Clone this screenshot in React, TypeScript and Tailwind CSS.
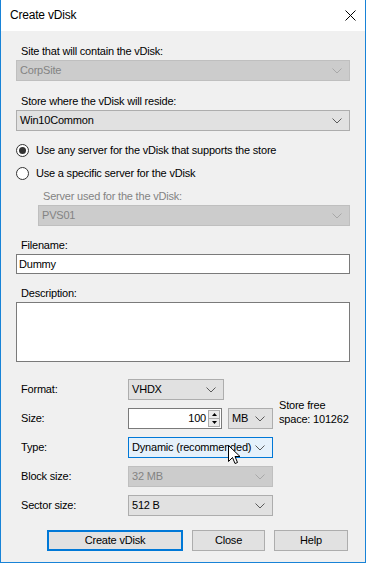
import type { ReactNode } from 'react';

const font = { fontFamily: '"Liberation Sans", Arial, sans-serif' };

function Chevron({ disabled }: { disabled?: boolean }) {
  return (
    <svg width="10" height="6" viewBox="0 0 10 6" className="shrink-0">
      <path
        d="M0.5 0.5 L5 5 L9.5 0.5"
        fill="none"
        stroke={disabled ? '#a8a8a8' : '#5a5a5a'}
        strokeWidth="1"
      />
    </svg>
  );
}

function Combo({
  value,
  disabled,
  focused,
  className = '',
}: {
  value: string;
  disabled?: boolean;
  focused?: boolean;
  className?: string;
}) {
  const tone = disabled
    ? 'bg-[#cccccc] border-[#bfbfbf] text-[#838383]'
    : focused
      ? 'bg-[#e5f1fb] border-[#0078d7] text-black'
      : 'bg-[#e1e1e1] border-[#adadad] text-black';
  return (
    <div className={`flex h-[21px] shrink-0 items-center justify-between whitespace-nowrap border pl-[3px] pr-[7px] ${tone} ${className}`}>
      <span className="leading-[15px]">{value}</span>
      <Chevron disabled={disabled} />
    </div>
  );
}

function Label({ children, className = '' }: { children: ReactNode; className?: string }) {
  return <div className={`h-[16px] shrink-0 whitespace-nowrap pl-[5px] leading-[15px] ${className}`}>{children}</div>;
}

function Radio({ checked, children }: { checked?: boolean; children: ReactNode }) {
  return (
    <div className="flex h-[23px] items-center gap-[7px] whitespace-nowrap">
      <span className="flex h-[13px] w-[13px] items-center justify-center rounded-full border border-[#333333] bg-white">
        {checked && <span className="h-[7px] w-[7px] rounded-full bg-[#333333]" />}
      </span>
      <span className="leading-[15px]">{children}</span>
    </div>
  );
}

function Row({ label, children }: { label: string; children: ReactNode }) {
  return (
    <div className="flex h-[21px] items-center whitespace-nowrap">
      <div className="w-[112px] shrink-0 pl-[5px] leading-[15px]">{label}</div>
      {children}
    </div>
  );
}

function Button({ children, primary, className = '' }: { children: ReactNode; primary?: boolean; className?: string }) {
  return (
    <div
      className={`flex h-[21px] items-center justify-center bg-[#e1e1e1] leading-[15px] ${
        primary ? 'border-2 border-[#0078d7]' : 'border border-[#adadad]'
      } ${className}`}
    >
      {children}
    </div>
  );
}

function Cursor() {
  return (
    <svg width="13" height="20" viewBox="0 0 13 20" className="pointer-events-none absolute left-[227px] top-[445px]">
      <path
        d="M0.5 0.5 L0.5 16.5 L4.5 12.5 L7 18.5 L9.5 17.5 L7 11.5 L12 11.5 Z"
        fill="white"
        stroke="black"
        strokeWidth="1"
        strokeLinejoin="miter"
      />
    </svg>
  );
}

export default function App() {
  return (
    <div
      style={font}
      className="relative flex h-[563px] w-[366px] flex-col overflow-hidden border-x border-b border-[#1883d7] bg-[#f0f0f0] text-[11px] tracking-[-0.2px] text-black"
    >
      <div className="flex h-[31px] shrink-0 items-center justify-between bg-white pl-[9px] pr-[9px]">
        <span className="text-[12px] leading-[15px]">Create vDisk</span>
        <svg width="11" height="11" viewBox="0 0 11 11">
          <path d="M0.5 0.5 L10.5 10.5 M10.5 0.5 L0.5 10.5" stroke="black" strokeWidth="1" />
        </svg>
      </div>

      <div className="flex flex-col px-[15px]">
        <Label className="mt-[13px]">Site that will contain the vDisk:</Label>
        <Combo value="CorpSite" disabled />

        <Label className="mt-[13px]">Store where the vDisk will reside:</Label>
        <Combo value="Win10Common" />

        <div className="mt-[8px] flex flex-col">
          <Radio checked>Use any server for the vDisk that supports the store</Radio>
          <Radio>Use a specific server for the vDisk</Radio>
        </div>

        <div className="ml-[22px] flex flex-col">
          <Label className="mt-[4px] text-[#838383]">Server used for the the vDisk:</Label>
          <Combo value="PVS01" disabled />
        </div>

        <Label className="mt-[12px]">Filename:</Label>
        <div className="flex h-[20px] shrink-0 items-center border border-[#7a7a7a] bg-white pl-[2px] leading-[15px]">Dummy</div>

        <Label className="mt-[12px]">Description:</Label>
        <div className="h-[60px] shrink-0 border border-[#7a7a7a] bg-white" />

        <div className="mt-[17px] flex flex-col gap-[8px]">
          <Row label="Format:">
            <Combo value="VHDX" className="w-[96px]" />
          </Row>
          <Row label="Size:">
            <div className="flex h-[21px] w-[94px] shrink-0 items-center border border-[#7a7a7a] bg-white">
              <span className="flex-1 pr-[2px] text-right leading-[15px]">100</span>
              <div className="mr-[1px] flex h-[17px] w-[12px] flex-col border border-[#acacac] bg-[#eaeaea]">
                <div className="flex flex-1 items-center justify-center border-b border-[#acacac]">
                  <svg width="5" height="3" viewBox="0 0 5 3"><path d="M2.5 0 L5 3 L0 3 Z" fill="black" /></svg>
                </div>
                <div className="flex flex-1 items-center justify-center">
                  <svg width="5" height="3" viewBox="0 0 5 3"><path d="M0 0 L5 0 L2.5 3 Z" fill="black" /></svg>
                </div>
              </div>
            </div>
            <Combo value="MB" className="ml-[6px] w-[45px]" />
            <div className="mb-[14px] ml-[6px] leading-[14px]">
              Store free
              <br />
              space: 101262
            </div>
          </Row>
          <Row label="Type:">
            <Combo value="Dynamic (recommended)" focused className="w-[145px]" />
          </Row>
          <Row label="Block size:">
            <Combo value="32 MB" disabled className="w-[145px]" />
          </Row>
          <Row label="Sector size:">
            <Combo value="512 B" className="w-[145px]" />
          </Row>
        </div>

        <div className="mt-[14px] flex justify-end gap-[9px] pr-[2px]">
          <Button primary className="w-[136px]">Create vDisk</Button>
          <Button className="w-[73px]">Close</Button>
          <Button className="w-[74px]">Help</Button>
        </div>
      </div>

      <Cursor />
    </div>
  );
}
